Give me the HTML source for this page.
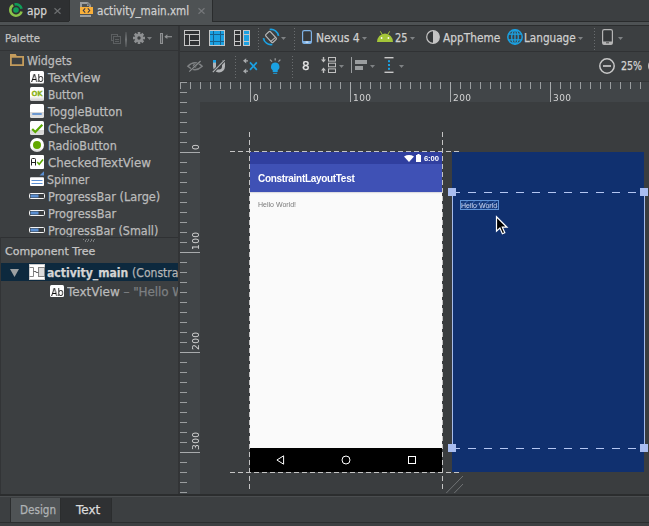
<!DOCTYPE html>
<html>
<head>
<meta charset="utf-8">
<title>activity_main.xml</title>
<style>
html,body{margin:0;padding:0;}
body{width:649px;height:526px;background:#3c3f41;position:relative;overflow:hidden;
 font-family:"DejaVu Sans","Liberation Sans",sans-serif;font-size:12px;color:#bbbbbb;}
.a{position:absolute;}
.t{position:absolute;white-space:nowrap;line-height:16px;height:16px;-webkit-text-stroke:0.25px;}
.h{font-size:11px;}
.r{font-family:"Liberation Sans",sans-serif;-webkit-text-stroke:0;}
svg{position:absolute;overflow:visible;}
.ic{position:absolute;}
</style>
</head>
<body>

<!-- ===== editor tabs ===== -->
<div class="a" style="left:0;top:0;width:69px;height:21px;background:#2e3032;"></div>
<div class="a" style="left:0;top:21px;width:649px;height:1px;background:#292b2c;"></div>
<div class="a" style="left:69px;top:0;width:143px;height:22px;background:#4e5254;"></div>
<div class="a" style="left:69px;top:0;width:1px;height:21px;background:#2a2c2d;"></div>
<div class="a" style="left:212px;top:0;width:1px;height:22px;background:#2a2c2d;"></div>
<div class="a" style="left:0;top:22px;width:649px;height:3px;background:#4e5254;"></div>
<div class="a" style="left:0;top:25px;width:649px;height:1px;background:#2b2d2e;"></div>

<svg style="left:8px;top:2px" width="16" height="16" viewBox="0 0 16 16">
 <path d="M13.51 9.48 A5.7 5.7 0 1 1 5.15 3.06" fill="none" stroke="#8bc34a" stroke-width="2.6"/>
 <path d="M6.52 2.49 A5.7 5.7 0 0 1 13.58 6.81" fill="none" stroke="#0f9d58" stroke-width="2.6"/>
 <circle cx="8" cy="8" r="2.8" fill="#0f9d58"/>
</svg>
<div class="t" style="left:27px;top:3px;color:#d4d4d4;transform-origin:0 0;transform:scaleX(0.88);">app</div>
<svg style="left:54px;top:8px" width="7" height="6" viewBox="0 0 7 6"><path d="M0.5 0.2 L6.5 5.8 M6.5 0.2 L0.5 5.8" stroke="#6c6e70" stroke-width="1.2" fill="none"/></svg>

<svg style="left:80px;top:2px" width="13" height="15" viewBox="0 0 13 15">
 <path d="M0 5 V0 H8 L11 3 V5 Z" fill="#9a9d9f"/>
 <path d="M2 5 V2 H7 V4 H9 V5 Z" fill="#4e5254"/>
 <path d="M8 0.6 V3 H10.4" fill="none" stroke="#5a5d5f" stroke-width="0.8"/>
 <rect x="0" y="13" width="11" height="2" fill="#9a9d9f"/>
 <rect x="0" y="5" width="13" height="7" fill="#f9b03a"/>
 <path d="M5.2 6.4 L3.3 8.5 L5.2 10.6 M7.8 6.4 L9.7 8.5 L7.8 10.6" fill="none" stroke="#3a3a48" stroke-width="1.1"/>
</svg>
<div class="t" style="left:97px;top:3px;color:#d0d0d0;transform-origin:0 0;transform:scaleX(0.868);">activity_main.xml</div>
<svg style="left:198px;top:8px" width="7" height="6" viewBox="0 0 7 6"><path d="M0.5 0.2 L6.5 5.8 M6.5 0.2 L0.5 5.8" stroke="#74777a" stroke-width="1.2" fill="none"/></svg>

<!-- ===== palette panel ===== -->
<div class="t h" style="left:5px;top:31px;transform-origin:0 0;transform:scaleX(0.92);color:#c4c4c4;">Palette</div>
<div class="a" style="left:0;top:50px;width:178px;height:1px;background:#323436;"></div>
<svg style="left:111px;top:34px" width="10" height="10" viewBox="0 0 10 10">
 <rect x="0.5" y="0.5" width="6" height="6" fill="none" stroke="#5c5f61"/>
 <rect x="2.5" y="2.5" width="7" height="7" fill="#3c3f41" stroke="#5c5f61"/>
 <path d="M4 5.5 H8 M4 7.5 H8" stroke="#5c5f61" stroke-width="1"/>
</svg>
<div class="a" style="left:125px;top:32px;width:2px;height:15px;background:linear-gradient(#4a4d4f,#707375 50%,#4a4d4f);"></div>
<svg style="left:133px;top:32px" width="12" height="12" viewBox="-6 -6 12 12">
 <g fill="#8e9092">
  <rect x="-1.3" y="-6" width="2.6" height="12"/>
  <rect x="-1.3" y="-6" width="2.6" height="12" transform="rotate(45)"/>
  <rect x="-1.3" y="-6" width="2.6" height="12" transform="rotate(90)"/>
  <rect x="-1.3" y="-6" width="2.6" height="12" transform="rotate(135)"/>
  <circle r="4.2"/>
 </g>
 <circle r="1.7" fill="#3c3f41"/>
</svg>
<svg style="left:147px;top:37px" width="5" height="3" viewBox="0 0 5 3"><path d="M0 0 H5 L2.5 3 Z" fill="#7a7d7f"/></svg>
<svg style="left:160px;top:33px" width="13" height="11" viewBox="0 0 13 11">
 <rect x="0.5" y="0.5" width="2" height="10" fill="#5a5d5f" stroke="#8e9092"/>
 <path d="M5 3.7 H12" stroke="#8e9092" stroke-width="1.2"/>
 <path d="M4.3 3.7 L7.4 1.3 V6.1 Z" fill="#8e9092"/>
</svg>
<div class="a" style="left:0;top:50px;width:178px;height:187px;overflow:hidden;">
<div class="t" style="left:27px;top:3px;transform-origin:0 0;transform:scaleX(0.924);">Widgets</div>
<div class="t" style="left:47.5px;top:20px;transform-origin:0 0;transform:scaleX(0.994);">TextView</div>
<div class="t" style="left:47.5px;top:37px;transform-origin:0 0;transform:scaleX(0.888);">Button</div>
<div class="t" style="left:47.5px;top:54px;transform-origin:0 0;transform:scaleX(0.945);">ToggleButton</div>
<div class="t" style="left:47.5px;top:71px;transform-origin:0 0;transform:scaleX(0.9375);">CheckBox</div>
<div class="t" style="left:47.5px;top:88px;transform-origin:0 0;transform:scaleX(0.93);">RadioButton</div>
<div class="t" style="left:47.5px;top:105px;transform-origin:0 0;transform:scaleX(0.987);">CheckedTextView</div>
<div class="t" style="left:47px;top:122px;transform-origin:0 0;transform:scaleX(0.92);">Spinner</div>
<div class="t" style="left:47.5px;top:139px;transform-origin:0 0;transform:scaleX(0.946);">ProgressBar (Large)</div>
<div class="t" style="left:47.5px;top:156px;transform-origin:0 0;transform:scaleX(0.95);">ProgressBar</div>
<div class="t" style="left:47.5px;top:173px;transform-origin:0 0;transform:scaleX(0.933);">ProgressBar (Small)</div>
</div>

<svg style="left:10px;top:54px" width="14" height="12" viewBox="0 0 14 12">
 <path d="M0.9 11.1 V2.9 H13.1 V11.1 Z" fill="none" stroke="#c49c5c" stroke-width="1.8"/>
 <path d="M0 0 H5.8 L7 2.6 H0 Z" fill="#c49c5c"/>
</svg>
<!-- TextView -->
<div class="a" style="left:30px;top:71px;width:14px;height:12px;background:#fff;border-radius:1.5px;box-shadow:0 1px 0 #9a9a9a;"></div>
<div class="t" style="left:31px;top:69.5px;font-size:10.5px;color:#111;will-change:transform;-webkit-text-stroke:0;transform-origin:0 0;transform:scaleX(0.9);">Ab</div>
<!-- Button -->
<div class="a" style="left:30px;top:87px;width:14px;height:14px;background:linear-gradient(#fff 0,#fff 65%,#c8c8c8 100%);border-radius:1.5px;"></div>
<div class="t" style="left:31.5px;top:85.5px;font-size:7px;font-weight:bold;color:#8bb31d;letter-spacing:-0.3px;">OK</div>
<!-- ToggleButton -->
<div class="a" style="left:30px;top:104px;width:14px;height:14px;background:linear-gradient(#fff 0,#fff 55%,#d6d6d6 60%,#e2e2e2 100%);border-radius:1.5px;"></div>
<div class="a" style="left:32px;top:113px;width:10px;height:2px;background:#6c98d0;border-radius:1px;"></div>
<!-- CheckBox -->
<div class="a" style="left:30px;top:121px;width:14px;height:14px;background:linear-gradient(#fff 0,#fff 62%,#d4d4d4 66%,#dcdcdc 100%);border-radius:1.5px;"></div>
<svg style="left:30px;top:121px" width="14" height="14" viewBox="0 0 14 14"><path d="M2.2 8 L5.3 11 L12.3 3.8" fill="none" stroke="#5aa800" stroke-width="2.2"/></svg>
<!-- RadioButton -->
<div class="a" style="left:30px;top:138px;width:14px;height:14px;background:linear-gradient(#fff 0,#fff 70%,#cfcfcf 100%);border-radius:7px;"></div>
<div class="a" style="left:33px;top:141px;width:8px;height:8px;background:#62a800;border-radius:4px;"></div>
<!-- CheckedTextView -->
<div class="a" style="left:30px;top:155px;width:14px;height:14px;background:#fff;border-radius:1px;"></div>
<svg style="left:30px;top:155px" width="14" height="14" viewBox="0 0 14 14">
 <path d="M1.5 10.5 V4.5 Q1.5 3.5 2.5 3.5 H4.5 Q5.5 3.5 5.5 4.5 V10.5 M1.5 7.5 H5.5" fill="none" stroke="#222" stroke-width="1"/>
 <path d="M7.2 7 L9.2 9.2 L13 4.6" fill="none" stroke="#5aa800" stroke-width="1.6"/>
</svg>
<!-- Spinner -->
<svg style="left:30px;top:171px" width="14" height="15" viewBox="0 0 14 15">
 <path d="M14 0.3 V4.6 H9.5 Z" fill="#5b8fd2"/>
 <rect x="0" y="6.2" width="14" height="8.8" rx="1" fill="#fff"/>
 <path d="M1.5 9.5 H12.5 M1.5 12.5 H12.5" stroke="#5b8fd2" stroke-width="1"/>
</svg>
<svg style="left:29px;top:193px" width="16" height="6" viewBox="0 0 16 6">
 <rect x="0.5" y="0.5" width="15" height="5" rx="1" fill="#3a3d3f" stroke="#f4f4f4"/>
 <rect x="1.5" y="1.5" width="8" height="3" fill="#5b8fd2"/>
</svg>
<svg style="left:29px;top:210px" width="16" height="6" viewBox="0 0 16 6">
 <rect x="0.5" y="0.5" width="15" height="5" rx="1" fill="#3a3d3f" stroke="#f4f4f4"/>
 <rect x="1.5" y="1.5" width="8" height="3" fill="#5b8fd2"/>
</svg>
<svg style="left:29px;top:227px" width="16" height="6" viewBox="0 0 16 6">
 <rect x="0.5" y="0.5" width="15" height="5" rx="1" fill="#3a3d3f" stroke="#f4f4f4"/>
 <rect x="1.5" y="1.5" width="8" height="3" fill="#5b8fd2"/>
</svg>

<!-- component tree -->
<div class="a" style="left:0;top:237px;width:179px;height:257px;background:#3c3f41;"></div>
<div class="a" style="left:0;top:237px;width:179px;height:1px;background:#2f3133;"></div>
<div class="a" style="left:0;top:237px;width:1px;height:257px;background:#323436;"></div>
<div class="a" style="left:83px;top:239px;width:12px;height:3px;background:repeating-linear-gradient(115deg,#7a7d7f 0 1px,transparent 1px 2.5px);"></div>
<div class="t h" style="left:5px;top:244px;color:#c4c4c4;">Component Tree</div>
<div class="a" style="left:1px;top:263px;width:178px;height:18px;background:#0d293e;"></div>
<svg style="left:10px;top:269px" width="9" height="8" viewBox="0 0 9 8"><path d="M0 0 H9 L4.5 8 Z" fill="#9da0a2"/></svg>
<svg style="left:29px;top:264px" width="16" height="16" viewBox="0 0 16 16">
 <rect x="0.5" y="0.5" width="15" height="15" fill="#fff" stroke="#cdcdcd"/>
 <path d="M0.5 3.5 H4.5 V12.5 H0.5" fill="none" stroke="#858585" stroke-width="1"/>
 <rect x="9.5" y="3.5" width="6" height="9" fill="#dcdcdc" stroke="#858585" stroke-width="1"/>
 <path d="M4.5 7.5 H7 V8.5 H9.5" fill="none" stroke="#6a6a6a" stroke-width="1"/>
</svg>
<div class="a" style="left:47px;top:265px;width:131px;height:16px;overflow:hidden;">
 <div class="t" style="left:0;top:0;font-weight:bold;color:#d4d4d4;transform-origin:0 0;transform:scaleX(0.905);">activity_main <span style="font-weight:normal;color:#b4b4b4;">(ConstraintLayout)</span></div>
</div>
<div class="a" style="left:50px;top:285px;width:14px;height:12px;background:#fff;border-radius:1.5px;"></div>
<div class="t" style="left:51px;top:283.5px;font-size:10.5px;color:#111;will-change:transform;-webkit-text-stroke:0;transform-origin:0 0;transform:scaleX(0.9);">Ab</div>
<div class="a" style="left:67px;top:284px;width:111px;height:17px;overflow:hidden;">
 <div class="t" style="left:0;top:0;">TextView <span style="color:#7c7f81;letter-spacing:-0.1px;"> – "Hello World!"</span></div>
</div>

<!-- panel divider -->
<div class="a" style="left:178px;top:26px;width:2px;height:468px;background:#323436;"></div>

<!-- ===== toolbar row 1 ===== -->
<svg style="left:184px;top:30px" width="16" height="16" viewBox="0 0 16 16" shape-rendering="crispEdges">
 <rect x="0" y="0" width="16" height="16" fill="#c6c6c6"/>
 <rect x="1" y="1" width="14" height="3" fill="#2f3133"/>
 <rect x="1" y="5" width="4" height="10" fill="#2f3133"/>
 <rect x="6" y="5" width="9" height="5" fill="#2f3133"/>
 <rect x="6" y="11" width="9" height="4" fill="#2f3133"/>
</svg>
<svg style="left:209px;top:30px" width="16" height="16" viewBox="0 0 16 16" shape-rendering="crispEdges">
 <rect x="0" y="0" width="16" height="16" fill="#c6c6c6"/>
 <rect x="1" y="1" width="14" height="14" fill="#1ba1e2"/>
 <path d="M4.5 1 V15 M11.5 1 V15 M1 4.5 H15 M1 11.5 H15" stroke="#17608c" stroke-width="1"/>
</svg>
<svg style="left:234px;top:30px" width="16" height="16" viewBox="0 0 16 16" shape-rendering="crispEdges">
 <rect x="0" y="0" width="7" height="16" fill="#c6c6c6"/>
 <rect x="1" y="1" width="5" height="3" fill="#2f3133"/>
 <rect x="1" y="5" width="5" height="6" fill="#2f3133"/>
 <rect x="1" y="12" width="5" height="3" fill="#2f3133"/>
 <rect x="9" y="0" width="7" height="16" fill="#c6c6c6"/>
 <rect x="10" y="1" width="5" height="3" fill="#1ba1e2"/>
 <rect x="10" y="5" width="5" height="6" fill="#1ba1e2"/>
 <rect x="10" y="12" width="5" height="3" fill="#1ba1e2"/>
</svg>
<div class="a" style="left:258px;top:28px;width:1px;height:22px;background:repeating-linear-gradient(#6a6d6f 0 1px,transparent 1px 3px);"></div>
<svg style="left:263px;top:29px" width="16" height="16" viewBox="-8 -8 16 16">
 <g transform="rotate(-42)">
  <rect x="-3.1" y="-5.3" width="6.2" height="10.6" rx="1.2" fill="#3c3f41" stroke="#b8b8b8" stroke-width="1.2"/>
  <path d="M-3.1 3.2 H3.1" stroke="#b8b8b8" stroke-width="1"/>
 </g>
 <path d="M-1.32 -7.48 A7.6 7.6 0 0 1 7.53 -1.06" fill="none" stroke="#1ba1e2" stroke-width="1.7"/>
 <path d="M1.32 7.48 A7.6 7.6 0 0 1 -7.53 1.06" fill="none" stroke="#1ba1e2" stroke-width="1.7"/>
</svg>
<svg style="left:281px;top:37px" width="5" height="3" viewBox="0 0 5 3"><path d="M0 0 H5 L2.5 3 Z" fill="#7f8284"/></svg>
<div class="a" style="left:294px;top:28px;width:1px;height:22px;background:repeating-linear-gradient(#6a6d6f 0 1px,transparent 1px 3px);"></div>
<svg style="left:302px;top:30px" width="10" height="14" viewBox="0 0 10 14">
 <rect x="0.6" y="0.6" width="8.8" height="12.8" rx="1.6" fill="#35383a" stroke="#7fb2e5" stroke-width="1.2"/>
 <path d="M0.6 11 H9.4 V12 Q9.4 13.4 8 13.4 H2 Q0.6 13.4 0.6 12 Z" fill="#7fb2e5"/>
 <rect x="3.6" y="11.6" width="2.8" height="1" fill="#e8f2fc"/>
</svg>
<div class="t" style="left:316px;top:30px;color:#d0d0d0;transform-origin:0 0;transform:scaleX(0.9);">Nexus 4</div>
<svg style="left:362px;top:37px" width="5" height="3" viewBox="0 0 5 3"><path d="M0 0 H5 L2.5 3 Z" fill="#7f8284"/></svg>
<svg style="left:377px;top:31px" width="16" height="11" viewBox="0 0 16 11">
 <path d="M0 11 A8 8.6 0 0 1 16 11 Z" fill="#a4c639"/>
 <path d="M3.3 0.3 L5.2 3.4 M12.7 0.3 L10.8 3.4" stroke="#a4c639" stroke-width="1"/>
 <circle cx="4.6" cy="7" r="0.9" fill="#fff"/><circle cx="11.4" cy="7" r="0.9" fill="#fff"/>
</svg>
<div class="t" style="left:395px;top:30px;color:#d0d0d0;transform-origin:0 0;transform:scaleX(0.82);">25</div>
<svg style="left:410px;top:37px" width="5" height="3" viewBox="0 0 5 3"><path d="M0 0 H5 L2.5 3 Z" fill="#7f8284"/></svg>
<svg style="left:426px;top:30px" width="14" height="14" viewBox="0 0 14 14">
 <circle cx="7" cy="7" r="6.3" fill="#35383a" stroke="#c4c4c4" stroke-width="1.2"/>
 <path d="M7 0.7 A6.3 6.3 0 0 1 7 13.3 Z" fill="#c4c4c4"/>
</svg>
<div class="t" style="left:442.5px;top:30px;color:#d0d0d0;transform-origin:0 0;transform:scaleX(0.883);">AppTheme</div>
<svg style="left:507px;top:29px" width="16" height="16" viewBox="0 0 16 16">
 <circle cx="8" cy="8" r="7.2" fill="none" stroke="#1ba1e2" stroke-width="1.5"/>
 <ellipse cx="8" cy="8" rx="3.3" ry="7.2" fill="none" stroke="#1ba1e2" stroke-width="1.3"/>
 <path d="M8 0.8 V15.2 M1.4 5.2 H14.6 M1.4 10.8 H14.6" stroke="#1ba1e2" stroke-width="1.3" fill="none"/>
</svg>
<div class="t" style="left:524px;top:30px;color:#d0d0d0;transform-origin:0 0;transform:scaleX(0.873);">Language</div>
<svg style="left:578px;top:37px" width="5" height="3" viewBox="0 0 5 3"><path d="M0 0 H5 L2.5 3 Z" fill="#7f8284"/></svg>
<div class="a" style="left:594px;top:28px;width:1px;height:22px;background:repeating-linear-gradient(#6a6d6f 0 1px,transparent 1px 3px);"></div>
<svg style="left:602px;top:29px" width="11" height="16" viewBox="0 0 11 16">
 <rect x="0.6" y="0.6" width="9.8" height="14.8" rx="1.6" fill="#35383a" stroke="#b4b4b4" stroke-width="1.2"/>
 <path d="M0.6 12.5 H10.4 V14 Q10.4 15.4 9 15.4 H2 Q0.6 15.4 0.6 14 Z" fill="#b4b4b4"/>
 <rect x="4" y="13.3" width="3" height="1" fill="#4a4a4a"/>
</svg>
<svg style="left:617.5px;top:37px" width="5" height="3" viewBox="0 0 5 3"><path d="M0 0 H5 L2.5 3 Z" fill="#7f8284"/></svg>

<!-- ===== toolbar row 2 ===== -->
<div class="a" style="left:180px;top:51px;width:469px;height:1px;background:#303234;"></div>
<svg style="left:187px;top:60px" width="16" height="12" viewBox="0 0 16 12">
 <path d="M0.8 6.2 Q8 -0.8 15.2 6.2 Q8 13.2 0.8 6.2 Z" fill="none" stroke="#7e8183" stroke-width="1.4"/>
 <circle cx="7.6" cy="6" r="1.9" fill="#7e8183"/>
 <path d="M2.2 11.6 L13.6 1" stroke="#3c3f41" stroke-width="2"/>
 <path d="M2.2 11.6 L13.6 1" stroke="#8a8d8f" stroke-width="1.2"/>
</svg>
<svg style="left:212px;top:60px" width="14" height="12" viewBox="0 0 14 12">
 <path d="M2.5 0 V6.5 A4.5 4.5 0 0 0 11.5 6.5 V0" fill="none" stroke="#b2b4b6" stroke-width="3"/>
 <rect x="1" y="0" width="3" height="2.6" fill="#1ba1e2"/>
 <path d="M0.8 12.2 L12.6 0.2" stroke="#3c3f41" stroke-width="3"/>
 <path d="M0.8 12.2 L12.6 0.2" stroke="#b0b3b5" stroke-width="1.1"/>
</svg>
<div class="a" style="left:235px;top:56px;width:1px;height:22px;background:repeating-linear-gradient(#6a6d6f 0 1px,transparent 1px 3px);"></div>
<svg style="left:243px;top:57px" width="15" height="17" viewBox="0 0 15 17">
 <path d="M0 3.8 L3.2 1.2 V6.4 Z M0 14.2 L3.2 11.6 V16.8 Z" fill="#a8abad"/>
 <path d="M3 3.8 H5 M3 14.2 H5" stroke="#a8abad" stroke-width="1.2"/>
 <path d="M7 5.4 L13.8 12.8 M13.8 5.4 L7 12.8" stroke="#1ba1e2" stroke-width="1.7"/>
</svg>
<svg style="left:269px;top:57px" width="13" height="17" viewBox="0 0 13 17">
 <path d="M6.2 5.6 A4.2 4.2 0 0 1 8.7 13.2 V15 H3.7 V13.2 A4.2 4.2 0 0 1 6.2 5.6 Z" fill="#1ba1e2"/>
 <rect x="4.2" y="15.8" width="4" height="1" fill="#1ba1e2"/>
 <path d="M6.2 1.2 V3.6 M1 2.6 L3 4.6 M11.4 2.6 L9.4 4.6" stroke="#96999b" stroke-width="1.3"/>
</svg>
<div class="a" style="left:291.5px;top:56px;width:1px;height:22px;background:repeating-linear-gradient(#6a6d6f 0 1px,transparent 1px 3px);"></div>
<div class="t" style="left:302px;top:58px;color:#e6e6e6;will-change:transform;">8</div>
<svg style="left:321px;top:57px" width="15" height="16" viewBox="0 0 15 16">
 <g fill="none" stroke="#c0c0c0" stroke-width="1">
  <rect x="7.5" y="0.5" width="7" height="3.6"/><rect x="7.5" y="6.2" width="7" height="3.6"/><rect x="7.5" y="11.9" width="7" height="3.6"/>
 </g>
 <path d="M2.5 0 V3 M2.5 16 V13" stroke="#c0c0c0" stroke-width="1.4"/>
 <path d="M0 2.6 H5 L2.5 5.6 Z M0 13.4 H5 L2.5 10.4 Z" fill="#c0c0c0"/>
</svg>
<svg style="left:339px;top:65px" width="5" height="3" viewBox="0 0 5 3"><path d="M0 0 H5 L2.5 3 Z" fill="#7f8284"/></svg>
<svg style="left:351px;top:57px" width="16" height="16" viewBox="0 0 16 16" shape-rendering="crispEdges">
 <rect x="0" y="0" width="1.4" height="16" fill="#9a9d9f"/>
 <rect x="3.6" y="3" width="12" height="4" fill="#9a9d9f"/>
 <rect x="3.6" y="9" width="8.4" height="4" fill="#9a9d9f"/>
</svg>
<svg style="left:369.5px;top:65px" width="5" height="3" viewBox="0 0 5 3"><path d="M0 0 H5 L2.5 3 Z" fill="#7f8284"/></svg>
<svg style="left:384px;top:57px" width="10" height="16" viewBox="0 0 10 16">
 <rect x="0.5" y="0" width="9" height="1.4" fill="#c8c8c8"/>
 <rect x="0.5" y="14.6" width="9" height="1.4" fill="#c8c8c8"/>
 <rect x="4" y="3.2" width="2" height="2" fill="#1ba1e2"/><rect x="4" y="7" width="2" height="2" fill="#1ba1e2"/><rect x="4" y="10.8" width="2" height="2" fill="#1ba1e2"/>
</svg>
<svg style="left:399px;top:65px" width="5" height="3" viewBox="0 0 5 3"><path d="M0 0 H5 L2.5 3 Z" fill="#7f8284"/></svg>
<svg style="left:599px;top:58px" width="16" height="16" viewBox="0 0 16 16">
 <circle cx="8" cy="8" r="7.2" fill="none" stroke="#c8c8c8" stroke-width="1.5"/>
 <path d="M4 8 H12" stroke="#c8c8c8" stroke-width="1.7"/>
</svg>
<div class="t" style="left:620.5px;top:58px;color:#d4d4d4;transform-origin:0 0;transform:scaleX(0.794);">25%</div>
<svg style="left:648px;top:58px" width="16" height="16" viewBox="0 0 16 16">
 <circle cx="8" cy="8" r="7.2" fill="none" stroke="#c8c8c8" stroke-width="1.5"/>
</svg>

<!-- ===== rulers & design surface ===== -->
<div class="a" style="left:180px;top:81px;width:469px;height:413px;background:#414548;"></div>
<div class="a" style="left:180px;top:81px;width:469px;height:1px;background:#343638;"></div>
<div class="a" style="left:200px;top:102px;width:449px;height:392px;background:#3a3d3f;"></div>
<div class="a" style="left:180px;top:82px;width:469px;height:7px;background:repeating-linear-gradient(to right,#9a9d9f 0 1px,transparent 1px 10px);"></div>
<div class="a" style="left:180px;top:82px;width:7px;height:412px;background:repeating-linear-gradient(to bottom,#9a9d9f 0 1px,transparent 1px 10px);"></div>
<div class="a" style="left:250px;top:82px;width:1px;height:20px;background:#a8abad;"></div>
<div class="t" style="left:252.5px;top:92px;font-size:9px;line-height:12px;height:12px;color:#d4d4d4;-webkit-text-stroke:0;letter-spacing:0.4px;will-change:transform;">0</div>
<div class="a" style="left:350px;top:82px;width:1px;height:20px;background:#a8abad;"></div>
<div class="t" style="left:352.5px;top:92px;font-size:9px;line-height:12px;height:12px;color:#d4d4d4;-webkit-text-stroke:0;letter-spacing:0.4px;will-change:transform;">100</div>
<div class="a" style="left:450px;top:82px;width:1px;height:20px;background:#a8abad;"></div>
<div class="t" style="left:452.5px;top:92px;font-size:9px;line-height:12px;height:12px;color:#d4d4d4;-webkit-text-stroke:0;letter-spacing:0.4px;will-change:transform;">200</div>
<div class="a" style="left:550px;top:82px;width:1px;height:20px;background:#a8abad;"></div>
<div class="t" style="left:552.5px;top:92px;font-size:9px;line-height:12px;height:12px;color:#d4d4d4;-webkit-text-stroke:0;letter-spacing:0.4px;will-change:transform;">300</div>
<div class="a" style="left:180px;top:152px;width:20px;height:1px;background:#a8abad;"></div>
<div class="t" style="left:190px;top:150px;font-size:9px;line-height:12px;height:12px;color:#d4d4d4;-webkit-text-stroke:0;letter-spacing:0.4px;will-change:transform;transform-origin:0 0;transform:rotate(-90deg);">0</div>
<div class="a" style="left:180px;top:252px;width:20px;height:1px;background:#a8abad;"></div>
<div class="t" style="left:190px;top:250px;font-size:9px;line-height:12px;height:12px;color:#d4d4d4;-webkit-text-stroke:0;letter-spacing:0.4px;will-change:transform;transform-origin:0 0;transform:rotate(-90deg);">100</div>
<div class="a" style="left:180px;top:352px;width:20px;height:1px;background:#a8abad;"></div>
<div class="t" style="left:190px;top:350px;font-size:9px;line-height:12px;height:12px;color:#d4d4d4;-webkit-text-stroke:0;letter-spacing:0.4px;will-change:transform;transform-origin:0 0;transform:rotate(-90deg);">200</div>
<div class="a" style="left:180px;top:452px;width:20px;height:1px;background:#a8abad;"></div>
<div class="t" style="left:190px;top:450px;font-size:9px;line-height:12px;height:12px;color:#d4d4d4;-webkit-text-stroke:0;letter-spacing:0.4px;will-change:transform;transform-origin:0 0;transform:rotate(-90deg);">300</div>

<!-- dashed frame -->
<div class="a" style="left:249px;top:132px;width:1px;height:358px;background:repeating-linear-gradient(to bottom,#c4c4c4 0 5px,transparent 5px 8px);"></div>
<div class="a" style="left:442px;top:132px;width:1px;height:358px;background:repeating-linear-gradient(to bottom,#c4c4c4 0 5px,transparent 5px 8px);"></div>
<div class="a" style="left:230px;top:151px;width:230px;height:1px;background:repeating-linear-gradient(to right,#c4c4c4 0 5px,transparent 5px 8px);"></div>
<div class="a" style="left:230px;top:472px;width:230px;height:1px;background:repeating-linear-gradient(to right,#c4c4c4 0 5px,transparent 5px 8px);"></div>

<!-- phone preview -->
<div class="a" style="left:250px;top:152px;width:192px;height:12px;background:#303f9f;"></div>
<div class="a" style="left:250px;top:164px;width:192px;height:28px;background:#3f51b5;"></div>
<div class="a" style="left:250px;top:192px;width:192px;height:256px;background:linear-gradient(#c9c9d4 0,#f0f0f0 1px,#fafafa 2px);"></div>
<div class="a" style="left:250px;top:448px;width:192px;height:24px;background:#000;"></div>
<div class="t r" style="left:258px;top:170.5px;font-size:10px;color:#fff;font-weight:bold;letter-spacing:-0.31px;will-change:transform;">ConstraintLayoutTest</div>
<div class="t r" style="left:258px;top:196.5px;font-size:7px;color:#7a7a7a;will-change:transform;">Hello World!</div>
<svg style="left:404px;top:155px" width="10" height="7" viewBox="0 0 10 7"><path d="M0 1.4 Q5 -1.4 10 1.4 L5 7 Z" fill="#fff"/></svg>
<svg style="left:416px;top:154px" width="5" height="8" viewBox="0 0 5 8"><path d="M0 1 H1.4 V0 H3.6 V1 H5 V8 H0 Z" fill="#fff"/></svg>
<div class="t r" style="left:424px;top:151px;font-size:7.6px;color:#fff;font-weight:bold;letter-spacing:-0.1px;will-change:transform;">6:00</div>
<svg style="left:276px;top:455px" width="9" height="10" viewBox="0 0 9 10"><path d="M7.6 0.8 V9.2 L0.9 5 Z" fill="none" stroke="#fff" stroke-width="1"/></svg>
<svg style="left:341px;top:455px" width="10" height="10" viewBox="0 0 10 10"><circle cx="5" cy="5" r="4" fill="none" stroke="#fff" stroke-width="1"/></svg>
<div class="a" style="left:408px;top:456px;width:6px;height:6px;border:1px solid #fff;"></div>

<!-- blueprint -->
<div class="a" style="left:452px;top:152px;width:192px;height:320px;background:#10306f;"></div>
<div class="a" style="left:452px;top:192px;width:1px;height:256px;background:#a6bbea;"></div>
<div class="a" style="left:644px;top:192px;width:1px;height:256px;background:#a6bbea;"></div>
<div class="a" style="left:452px;top:192px;width:192px;height:1px;background:repeating-linear-gradient(to right,#b4c6f2 0 8px,transparent 8px 16px);"></div>
<div class="a" style="left:452px;top:448px;width:192px;height:1px;background:repeating-linear-gradient(to right,#b4c6f2 0 8px,transparent 8px 16px);"></div>
<div class="a" style="left:448px;top:188px;width:8px;height:8px;background:#a9bdf0;"></div>
<div class="a" style="left:640px;top:188px;width:8px;height:8px;background:#a9bdf0;"></div>
<div class="a" style="left:448px;top:444px;width:8px;height:8px;background:#a9bdf0;"></div>
<div class="a" style="left:640px;top:444px;width:8px;height:8px;background:#a9bdf0;"></div>
<div class="a" style="left:460px;top:200px;width:37px;height:8px;border:1px solid #5f93d6;background:repeating-linear-gradient(135deg,#153a7c 0 4px,#2a55a0 4px 5px);"></div>
<div class="t r" style="left:461px;top:198px;font-size:7px;color:#ccd6ee;will-change:transform;">Hello World</div>

<!-- resize grip -->
<svg style="left:446px;top:475px" width="18" height="19" viewBox="0 0 18 19"><path d="M0.3 18 L17 1 M8.3 18 L17 9" stroke="#707375" stroke-width="1" fill="none"/></svg>

<!-- mouse cursor -->
<svg style="left:496px;top:216px" width="12" height="19" viewBox="0 0 12 19">
 <path d="M0.5 0.8 V15.2 L3.9 12 L6.4 17.8 L8.8 16.8 L6.3 11.2 H11 Z" fill="#000" stroke="#fff" stroke-width="1.2"/>
</svg>

<!-- ===== bottom tabs ===== -->
<div class="a" style="left:0;top:494px;width:649px;height:32px;background:#3c3f41;"></div>
<div class="a" style="left:0;top:494px;width:649px;height:2px;background:#2b2d2e;"></div>
<div class="a" style="left:0;top:496px;width:649px;height:1px;background:#4a4d4f;"></div>
<div class="a" style="left:10px;top:498px;width:50px;height:24px;background:#4f5355;"></div>
<div class="a" style="left:60px;top:498px;width:51px;height:24px;background:#2f3133;"></div>
<div class="a" style="left:10px;top:498px;width:1px;height:24px;background:#2b2d2e;"></div>
<div class="a" style="left:60px;top:498px;width:1px;height:24px;background:#2b2d2e;"></div>
<div class="a" style="left:111px;top:498px;width:1px;height:24px;background:#2b2d2e;"></div>
<div class="a" style="left:0;top:522px;width:649px;height:1px;background:#2b2d2e;"></div>
<div class="t" style="left:19.5px;top:502px;transform-origin:0 0;transform:scaleX(0.87);color:#b0b3b5;">Design</div>
<div class="t" style="left:76px;top:502px;color:#dcdcdc;">Text</div>

</body>
</html>
